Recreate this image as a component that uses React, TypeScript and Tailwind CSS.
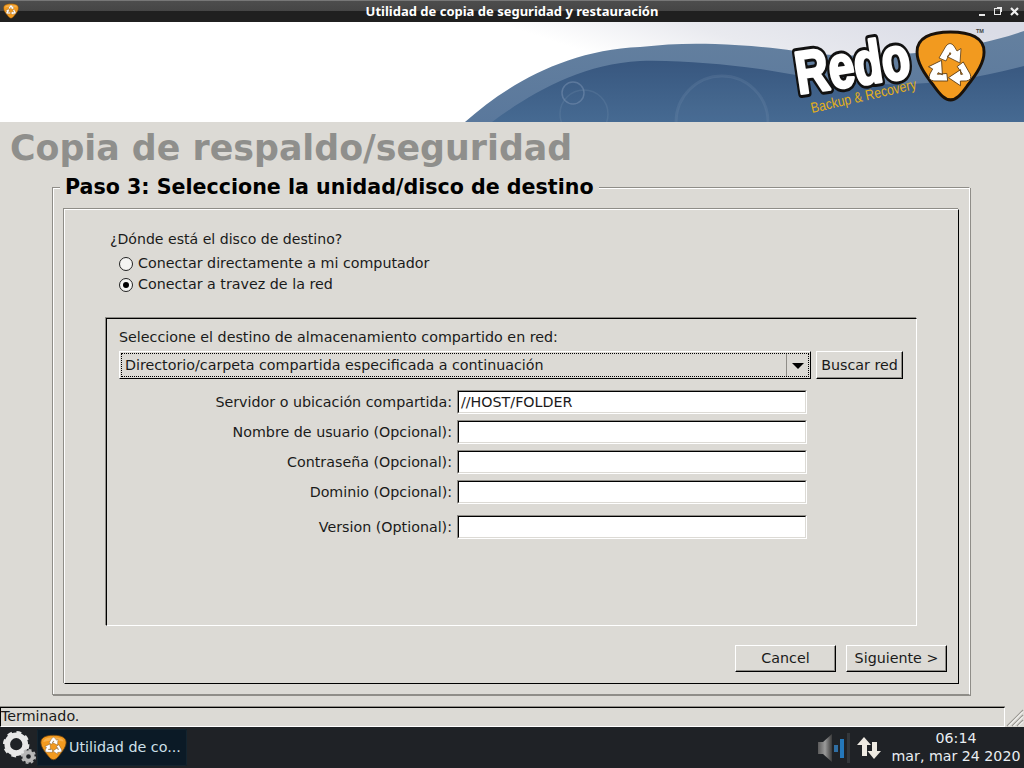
import React from "react";

const sans = "font-['DejaVu_Sans',sans-serif]";
const shieldPath = "M32 61C27 61 23 57 17 49C8 38 2 29 2 20C2 8 14 3 32 3C50 3 62 8 62 20C62 29 56 38 47 49C41 57 37 61 32 61Z";

function Arrows({ stroke = "#5b3a12" }: { stroke?: string }) {
  const arm = "M-11 -9L-4 -21Q0 -26 4 -21L7 -16L11 -18.5L10 -4L-3 -10.5L1 -13L0 -14.5L-4 -6Z";
  return (
    <g fill="#fff" stroke={stroke} strokeWidth="0.8" strokeLinejoin="round">
      <path d={arm} />
      <path d={arm} transform="rotate(120)" />
      <path d={arm} transform="rotate(240)" />
    </g>
  );
}

function Shield({ size, className }: { size: number; className?: string }) {
  return (
    <svg width={size} height={size} viewBox="0 0 64 64" className={className}>
      <path d={shieldPath} fill="#f29a1f" stroke="#6b4310" strokeWidth="2" />
      <path d="M8 19C8 11 16 8 32 8C48 8 56 11 56 18C46 14 18 14 8 19Z" fill="#f8b14c" />
      <g transform="translate(32 30) scale(0.95)"><Arrows /></g>
    </svg>
  );
}

function Banner() {
  return (
    <div className="h-[100px] w-full shrink-0 bg-white">
      <svg width="1024" height="100" viewBox="0 0 1024 100" className="block">
        <defs>
          <linearGradient id="sky" x1="0" x2="1" y1="0.5" y2="0.2">
            <stop offset="0" stopColor="#ffffff" />
            <stop offset="0.58" stopColor="#ffffff" />
            <stop offset="0.75" stopColor="#e9eaef" />
            <stop offset="1" stopColor="#dadce6" />
          </linearGradient>
          <linearGradient id="wave" x1="0" x2="0" y1="0" y2="1">
            <stop offset="0" stopColor="#38577f" />
            <stop offset="1" stopColor="#466a92" />
          </linearGradient>
          <linearGradient id="band" x1="0" x2="0" y1="0" y2="1">
            <stop offset="0" stopColor="#64809f" />
            <stop offset="1" stopColor="#5a789c" />
          </linearGradient>
        </defs>
        <rect width="1024" height="100" fill="url(#sky)" />
        <path d="M465 100C505 64 565 28 640 25C665 22 690 21 715 22C740 23 770 25 795 29C850 38 950 35 1024 9V100Z" fill="url(#band)" />
        <path d="M492 100C530 72 580 42 640 39C680 38 720 42 760 47C800 54 840 60 880 62C930 64 980 56 1024 44V100Z" fill="url(#wave)" />
        <circle cx="573" cy="71" r="11" fill="none" stroke="#7b94b3" strokeOpacity="0.5" strokeWidth="1.5" />
        <circle cx="584" cy="92" r="24" fill="none" stroke="#7b94b3" strokeOpacity="0.22" strokeWidth="1.5" />
        <circle cx="722" cy="100" r="46" fill="#7b94b3" fillOpacity="0.06" stroke="#7b94b3" strokeOpacity="0.2" strokeWidth="3" />
        <g transform="rotate(-8.5 799 75)">
          <text aria-hidden="true" x="799" y="72" textLength="115" lengthAdjust="spacingAndGlyphs" fontFamily="'Liberation Sans',sans-serif" fontWeight="700" fontSize="60" fill="#111" stroke="#111" strokeWidth="9" strokeLinejoin="round">Redo</text>
          <text x="799" y="72" textLength="115" lengthAdjust="spacingAndGlyphs" fontFamily="'Liberation Sans',sans-serif" fontWeight="700" fontSize="60" fill="#fff" stroke="#fff" strokeWidth="3" strokeLinejoin="round">Redo</text>
        </g>
        <text x="0" y="0" transform="translate(812 91) rotate(-13)" textLength="108" lengthAdjust="spacingAndGlyphs" fontFamily="'Liberation Sans',sans-serif" fontSize="14.5" fill="#e3b01a">Backup &amp; Recovery</text>
        <g transform="translate(914.8 6.5) scale(1.117 1.17)">
          <path d={shieldPath} fill="#f29a1f" stroke="#1a120a" strokeWidth="2.6" />
        </g>
        <g transform="translate(950 45)"><Arrows /></g>
        <text x="976" y="11" fontFamily="'Liberation Sans',sans-serif" fontSize="5.5" fontWeight="700" fill="#444">TM</text>
      </svg>
    </div>
  );
}

function TitleBar() {
  return (
    <div className="relative flex h-[22px] w-full shrink-0 items-center justify-center border-t border-[#777] bg-[linear-gradient(#4d4d4d_0,#454545_50%,#202020_50%,#202020_100%)]">
      <Shield size={16} className="absolute left-[3px] top-[2px]" />
      <span className="font-['Noto_Sans',sans-serif] text-[13px] font-bold leading-none text-white">Utilidad de copia de seguridad y restauración</span>
      <div className="absolute right-[5px] top-[5px] flex items-center gap-[9px] text-[#e8e8e8]">
        <div className="mt-[8px] h-[2px] w-[6px] bg-[#e8e8e8]" />
        <div className="relative h-[7px] w-[7px] border border-[#e8e8e8]">
          <div className="absolute -right-[2px] -top-[2px] h-[5px] w-[5px] border-r border-t border-[#e8e8e8]" />
        </div>
        <svg width="9" height="9" viewBox="0 0 9 9"><path d="M1 1L8 8M8 1L1 8" stroke="#eee" strokeWidth="2.2" /></svg>
      </div>
    </div>
  );
}

function RadioRow({ label, checked }: { label: string; checked?: boolean }) {
  return (
    <div className="flex h-[21px] items-center gap-[5px]">
      <div className="flex h-[14px] w-[14px] items-center justify-center rounded-full border border-[#222] bg-[#f4f4f2]">
        {checked && <div className="h-[6px] w-[6px] rounded-full bg-black" />}
      </div>
      <span>{label}</span>
    </div>
  );
}

function Field({ label, value, gap = "mb-[6px]" }: { label: string; value?: string; gap?: string }) {
  return (
    <div className={`flex h-[24px] items-center ${gap}`}>
      <label className="w-[338px] translate-y-[1px] pr-[5px] text-right">{label}</label>
      <div className="h-[24px] w-[350px] border border-b-white border-l-[#8f8d88] border-r-white border-t-[#8f8d88]">
        <div className="flex h-full w-full items-center border border-b-[#dcdad5] border-l-black border-r-[#dcdad5] border-t-black bg-white pl-[2px] leading-none">{value}</div>
      </div>
    </div>
  );
}

function RaisedButton({ label, className }: { label: string; className: string }) {
  return (
    <button className={`flex items-center justify-center border border-b-black border-l-white border-r-black border-t-white bg-[#dcdad5] pt-[1px] shadow-[inset_-1px_-1px_0_#8f8d88] ${className}`}>
      {label}
    </button>
  );
}

function Wizard() {
  return (
    <div className="relative ml-[52px] h-[508px] w-[918px] border border-b-[#8f8d88] border-l-[#8f8d88] border-r-white border-t-[#8f8d88] shadow-[inset_1px_1px_0_#fff,1px_1px_0_#8f8d88]">
      <div className="absolute left-[7px] top-[-15px] bg-[#dcdad5] px-[5px] text-[20.6px] font-bold leading-[28px] text-black">
        Paso 3: Seleccione la unidad/disco de destino
      </div>
      <div className="ml-[11px] mt-[21px] flex h-[475px] w-[895px] flex-col border border-b-black border-l-white border-r-black border-t-white pl-[41px] shadow-[-1px_-1px_0_#8f8d88]">
        <div className="mt-[20px] h-[18px] pl-[4px] text-[14.1px] leading-[18px]">¿Dónde está el disco de destino?</div>
        <div className="ml-[13px] mt-[5px] flex flex-col">
          <RadioRow label="Conectar directamente a mi computador" />
          <RadioRow label="Conectar a travez de la red" checked />
        </div>
        <div className="mt-[23px] h-[308px] w-[811px] border border-b-white border-l-black border-r-white border-t-black pl-[12px] pt-[9px] shadow-[-1px_-1px_0_#8f8d88]">
          <div className="h-[18px] leading-[18px]">Seleccione el destino de almacenamiento compartido en red:</div>
          <div className="mt-[5px] flex h-[28px] gap-[5px]">
            <div className="flex w-[692px] items-center border border-b-black border-l-white border-r-black border-t-white p-[1px]">
              <div className="flex h-full w-full items-center border border-dotted border-black pl-[3px]">
                <span className="flex-1 pt-[1px]">Directorio/carpeta compartida especificada a continuación</span>
                <div className="flex h-full w-[22px] items-center justify-center border-l border-[#8f8d88]">
                  <div className="mt-[2px] h-0 w-0 border-x-[6px] border-t-[6px] border-x-transparent border-t-black" />
                </div>
              </div>
            </div>
            <RaisedButton label="Buscar red" className="w-[87px]" />
          </div>
          <div className="mt-[11px] flex flex-col">
            <Field label="Servidor o ubicación compartida:" value="//HOST/FOLDER" />
            <Field label="Nombre de usuario (Opcional):" />
            <Field label="Contraseña (Opcional):" />
            <Field label="Dominio (Opcional):" gap="mb-[11px]" />
            <Field label="Version (Optional):" gap="" />
          </div>
        </div>
        <div className="mt-[19px] flex gap-[10px] pl-[629px]">
          <RaisedButton label="Cancel" className="h-[27px] w-[101px]" />
          <RaisedButton label="Siguiente >" className="h-[27px] w-[101px]" />
        </div>
      </div>
    </div>
  );
}

function StatusBar() {
  return (
    <div className="flex h-[20px] w-full shrink-0 items-stretch">
      <div className="flex-1 border border-b-white border-l-black border-r-white border-t-black leading-[17px] shadow-[0_-1px_0_#8f8d88]">Terminado.</div>
      <svg width="19" height="20" viewBox="0 0 19 20">
        <path d="M2 19L18 3M7 19L18 8M12 19L18 13" stroke="#9a9892" strokeWidth="1.2" />
        <path d="M3.5 19L18 4.5M8.5 19L18 9.5M13.5 19L18 14.5" stroke="#fff" strokeWidth="1" />
      </svg>
    </div>
  );
}

function Gears() {
  return (
    <svg width="36" height="36" viewBox="0 0 36 36">
      <circle cx="14" cy="14" r="9.5" fill="none" stroke="#e8e8e8" strokeWidth="6" />
      <circle cx="14" cy="14" r="12.5" fill="none" stroke="#e8e8e8" strokeWidth="3" strokeDasharray="5 4.8" />
      <circle cx="27" cy="27" r="4.5" fill="none" stroke="#b8b8b8" strokeWidth="4" />
      <circle cx="27" cy="27" r="7" fill="none" stroke="#b8b8b8" strokeWidth="2" strokeDasharray="3 2.5" />
    </svg>
  );
}

function Taskbar() {
  return (
    <div className="flex h-[41px] w-full shrink-0 items-center bg-[#1f2226] text-[#e6edf2]">
      <div className="ml-[3px] flex w-[34px] items-center"><Gears /></div>
      <div className="flex h-[37px] w-[150px] items-center gap-[2px] rounded-[2px] bg-[#0b1a26] pl-[3px] shadow-[inset_0_0_0_1px_#13242f]">
        <Shield size={27} />
        <span className="text-[14.3px] leading-none text-[#cfe0ea]">Utilidad de co...</span>
      </div>
      <svg width="34" height="34" viewBox="0 0 34 34" className="ml-[630px]">
        <defs>
          <linearGradient id="spk" x1="0" x2="1" y1="0" y2="0">
            <stop offset="0" stopColor="#5a5a5a" />
            <stop offset="0.5" stopColor="#9a9a9a" />
            <stop offset="1" stopColor="#3a3a3a" />
          </linearGradient>
        </defs>
        <path d="M1 11H6L15 3V31L6 23H1Z" fill="url(#spk)" />
        <rect x="17" y="14" width="4" height="7" fill="#2f6ea3" />
        <rect x="23" y="8" width="4" height="19" fill="#2478bb" />
        <rect x="30" y="2" width="3" height="30" fill="#33373b" />
      </svg>
      <svg width="26" height="26" viewBox="0 0 26 26" className="ml-[5px]" fill="#eeeae2">
        <path d="M8 2L15 10H11V21H6V10H1Z" />
        <path d="M18 24L25 16H21V7H16V16H11.5Z" />
      </svg>
      <div className="mb-[2px] ml-[8px] flex w-[132px] flex-col items-center text-[14.2px] leading-[18px] text-[#e9eef2]">
        <span>06:14</span>
        <span className="whitespace-nowrap">mar, mar 24 2020</span>
      </div>
    </div>
  );
}

export default function App() {
  return (
    <div className={`flex h-[768px] w-[1024px] flex-col overflow-hidden bg-[#dcdad5] text-[14.27px] text-[#1a1a1a] ${sans}`}>
      <TitleBar />
      <Banner />
      <div className="flex min-h-0 flex-1 flex-col">
        <h1 className="ml-[10px] mt-[4px] h-[61px] text-[34.8px] font-bold leading-[44px] text-[#8f8f8c]">Copia de respaldo/seguridad</h1>
        <Wizard />
      </div>
      <StatusBar />
      <Taskbar />
    </div>
  );
}
